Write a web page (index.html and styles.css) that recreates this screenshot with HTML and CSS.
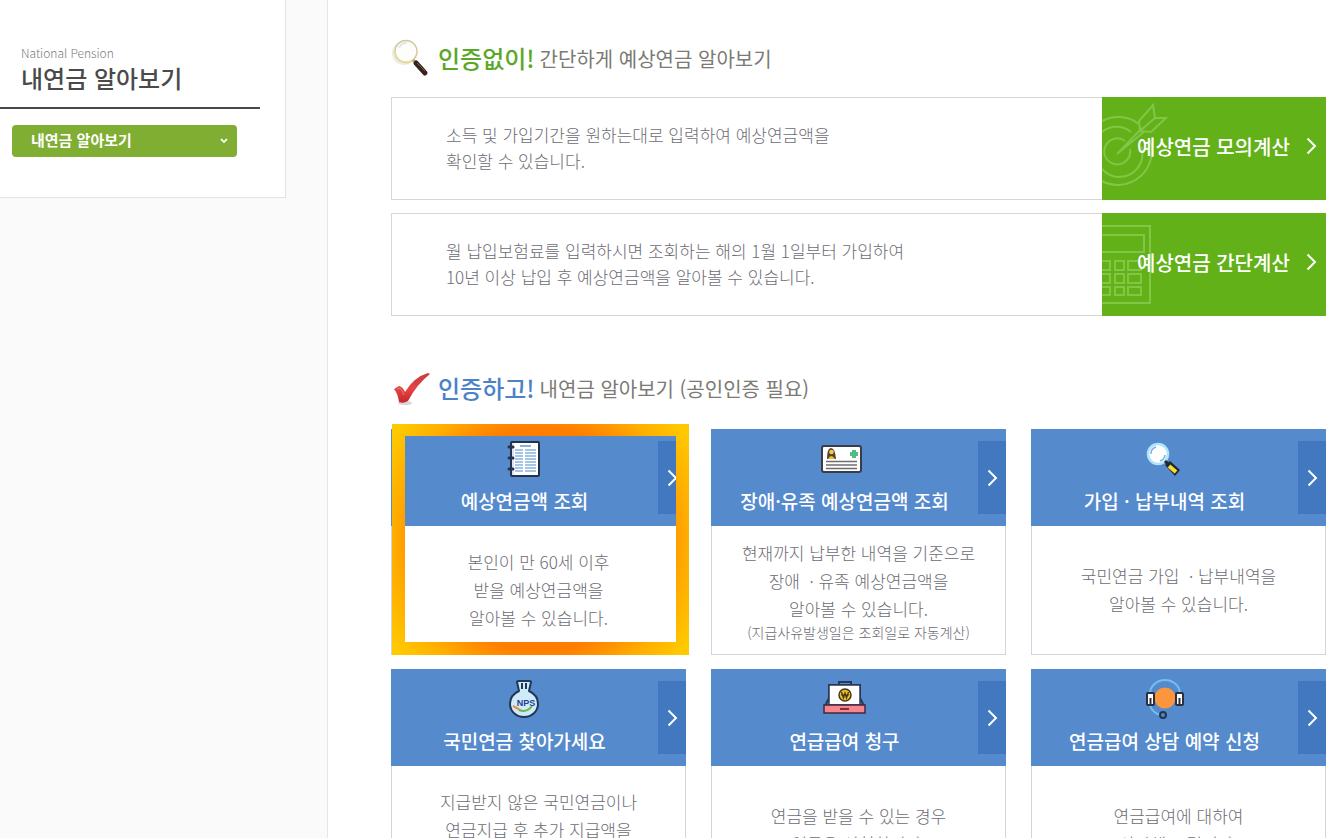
FILE: index.html
```html
<!DOCTYPE html>
<html lang="ko">
<head>
<meta charset="utf-8">
<meta name="viewport" content="width=device-width, initial-scale=1">
<title>내연금 알아보기</title>
<link rel="stylesheet" href="styles.css">
</head>
<body>
<div class="page">
  <aside class="side">
    <div class="side-box">
      <div class="side-head">
        <p class="side-eyebrow">National Pension</p>
        <h1 class="side-title">내연금 알아보기</h1>
      </div>
      <div class="side-menu">
        <select class="side-select" aria-label="메뉴 선택">
          <option>내연금 알아보기</option>
        </select>
        <svg class="side-caret" width="8" height="6" viewBox="0 0 8 6" aria-hidden="true"><path d="M1 1.2 L4 4 L7 1.2" fill="none" stroke="#fff" stroke-width="1.8"/></svg>
      </div>
    </div>
  </aside>

  <main class="main">
    <section>
      <h2 class="heading">
        <svg class="heading-icon" width="40" height="40" viewBox="0 0 40 40" aria-hidden="true">
          <circle cx="13" cy="15" r="12" fill="#ececea"/>
          <circle cx="15" cy="13.500" r="11" fill="#fdfdfc" stroke="#d3c99c" stroke-width="1.400"/>
          <path d="M4 14 A11 11 0 0 0 22 22" fill="none" stroke="#eadb92" stroke-width="1.600"/>
          <path d="M8 10 A8 8 0 0 1 16 5" fill="none" stroke="#e4e7e8" stroke-width="2"/>
          <path d="M22 22 L26 26" stroke="#b9a878" stroke-width="3"/>
          <path d="M25 25 L34 35" stroke="#35231c" stroke-width="5" stroke-linecap="round"/>
          <path d="M26 25 L34 33" stroke="#765b4c" stroke-width="1"/>
        </svg>
        <strong class="heading-mark green">인증없이!</strong>
        <span class="heading-text">간단하게 예상연금 알아보기</span>
      </h2>
      <div class="banners">
        <article class="banner">
          <p class="banner-text">소득 및 가입기간을 원하는대로 입력하여 예상연금액을<br>확인할 수 있습니다.</p>
          <a class="banner-link" href="#">
            <svg class="banner-art" width="66" height="103" viewBox="0 0 66 103" fill="none" stroke="#83c544" stroke-width="2" aria-hidden="true">
              <path d="M0 24 A34 34 0 0 1 37 27 M48 43 A34 34 0 0 1 0 84"/>
              <path d="M0 35 A23 23 0 0 1 29 35 M39 49 A23 23 0 0 1 0 72"/>
              <path d="M23 44 A13 13 0 1 0 28 52"/>
              <path d="M15 57 L40 31 M15 57 L43 34 M38 34 L37 24 L51 8 L53 21 L64 21 L49 35 Z M39 33 L53 21"/>
            </svg>
            <span>예상연금 모의계산</span>
            <svg class="chev" width="11" height="18" viewBox="0 0 11 18" aria-hidden="true"><path d="M1.500 1.500 L9 9 L1.500 16.500"/></svg>
          </a>
        </article>
        <article class="banner">
          <p class="banner-text">월 납입보험료를 입력하시면 조회하는 해의 1월 1일부터 가입하여<br>10년 이상 납입 후 예상연금액을 알아볼 수 있습니다.</p>
          <a class="banner-link" href="#">
            <svg class="banner-art" width="66" height="103" viewBox="0 0 66 103" fill="none" stroke="#83c544" stroke-width="2" aria-hidden="true">
              <path d="M0 13 H48 V90 H0 M0 22 H42 V39 H0"/>
              <path d="M0 48 H8 V57 H0 M13 48 H22 V57 H13 Z M26 48 H39 V57 H26 Z"/>
              <path d="M0 61 H8 V70 H0 M13 61 H22 V70 H13 Z M26 61 H39 V70 H26 Z"/>
              <path d="M0 74 H8 V82 H0 M13 74 H22 V82 H13 Z M26 74 H39 V82 H26 Z"/>
            </svg>
            <span>예상연금 간단계산</span>
            <svg class="chev" width="11" height="18" viewBox="0 0 11 18" aria-hidden="true"><path d="M1.500 1.500 L9 9 L1.500 16.500"/></svg>
          </a>
        </article>
      </div>
    </section>

    <section>
      <h2 class="heading second">
        <svg class="heading-icon" width="40" height="40" viewBox="0 0 40 40" aria-hidden="true">
          <defs><linearGradient id="tick" x1="0" y1="0" x2="0" y2="1"><stop offset="0" stop-color="#c93a3c"/><stop offset=".55" stop-color="#e54444"/><stop offset="1" stop-color="#c4262d"/></linearGradient></defs>
          <ellipse cx="14" cy="35" rx="7" ry="2" fill="#d9d5d5"/>
          <path d="M3 21 L8 18 Q12 19 14 24 Q23 9 37 5 L39 6 Q26 16 17 33 Q12 36 8 34 Q7 26 3 21 Z" fill="url(#tick)"/>
          <path d="M6 21 L9 20 Q11 22 13 27" fill="none" stroke="#ee7472" stroke-width="1"/>
        </svg>
        <strong class="heading-mark blue">인증하고!</strong>
        <span class="heading-text">내연금 알아보기 (공인인증 필요)</span>
      </h2>
      <div class="cards">
        <article class="card picked">
          <a class="card-head" href="#">
            <span class="card-name">
              <svg width="48" height="42" viewBox="0 0 48 42" aria-hidden="true">
                <rect x="10" y="4" width="28" height="34" rx="1" fill="#fff" stroke="#26324c" stroke-width="2"/>
                <path d="M12 5 V37" stroke="#b9c6d8" stroke-width="1"/>
                <path d="M8 9 H12 M8 20 H12 M8 31 H12" stroke="#26324c" stroke-width="3" stroke-linecap="round"/>
                <path d="M19 8 H30" stroke="#86b3de" stroke-width="2"/>
                <path d="M14 12 H22 M24 12 H35 M14 15 H22 M24 15 H35 M14 18 H22 M24 18 H35 M14 21 H22 M24 21 H35 M14 24 H22 M24 24 H35 M14 27 H22 M24 27 H35 M14 30 H22 M24 30 H35 M14 33 H22 M24 33 H35" stroke="#86b3de" stroke-width="1.600"/>
              </svg>
              <span>예상연금액 조회</span>
            </span>
            <span class="card-go"><svg class="chev" width="11" height="18" viewBox="0 0 11 18" aria-hidden="true"><path d="M1.500 1.500 L9 9 L1.500 16.500"/></svg></span>
          </a>
          <p class="card-text">본인이 만 60세 이후<br>받을 예상연금액을<br>알아볼 수 있습니다.</p>
          <div class="frame"></div>
        </article>

        <article class="card">
          <a class="card-head" href="#">
            <span class="card-name">
              <svg width="48" height="42" viewBox="0 0 48 42" aria-hidden="true">
                <rect x="1" y="8" width="39" height="26" rx="2" fill="#fff" stroke="#3a3d48" stroke-width="2"/>
                <path d="M6 21 Q6 10 10 10 Q14 10 15 21 Z" fill="#51432c"/>
                <circle cx="10.500" cy="14" r="2.300" fill="#f6c947"/><path d="M7 21 Q10 15 14 21 Z" fill="#f4bd2e"/>
                <path d="M33 12 V20 M29 16 H37" stroke="#55bd84" stroke-width="4"/>
                <path d="M5 23.500 H36 M5 27 H36 M5 30.500 H36" stroke="#716c70" stroke-width="1.600"/>
              </svg>
              <span>장애·유족 예상연금액 조회</span>
            </span>
            <span class="card-go"><svg class="chev" width="11" height="18" viewBox="0 0 11 18" aria-hidden="true"><path d="M1.500 1.500 L9 9 L1.500 16.500"/></svg></span>
          </a>
          <p class="card-text">현재까지 납부한 내역을 기준으로<br>장애 &nbsp;· 유족 예상연금액을<br>알아볼 수 있습니다.<small>(지급사유발생일은 조회일로 자동계산)</small></p>
        </article>

        <article class="card">
          <a class="card-head" href="#">
            <span class="card-name">
              <svg width="48" height="42" viewBox="0 0 48 42" aria-hidden="true">
                <circle cx="17" cy="16" r="10" fill="#fff" stroke="#aee5fa" stroke-width="2.500"/>
                <path d="M10 16 A7 7 0 0 1 15 9 M19 23 A7 7 0 0 0 24 17" fill="none" stroke="#78aee6" stroke-width="1.500"/>
                <path d="M24 23 L28 27" stroke="#25282c" stroke-width="3"/>
                <path d="M24 27 L29 23 L39 32 L34 38 Z" fill="#25282c"/>
                <path d="M28 28 L35 34" stroke="#f8dd38" stroke-width="4"/>
              </svg>
              <span>가입 · 납부내역 조회</span>
            </span>
            <span class="card-go"><svg class="chev" width="11" height="18" viewBox="0 0 11 18" aria-hidden="true"><path d="M1.500 1.500 L9 9 L1.500 16.500"/></svg></span>
          </a>
          <p class="card-text">국민연금 가입 &nbsp;· 납부내역을<br>알아볼 수 있습니다.</p>
        </article>

        <article class="card">
          <a class="card-head" href="#">
            <span class="card-name">
              <svg width="48" height="42" viewBox="0 0 48 42" aria-hidden="true">
                <path d="M16 4 Q16 3 18 3 H28 Q30 3 30 4 L28 13 Q37 17 37 26 A14 13 0 0 1 9 26 Q9 17 18 13 Z" fill="#cfeafa" stroke="#213854" stroke-width="2" stroke-linejoin="round"/>
                <path d="M21 5 V11 M25 5 V11" stroke="#213854" stroke-width="2"/>
                <path d="M12 28 Q16 30 19 32" fill="none" stroke="#ee8a4b" stroke-width="2"/><path d="M18 32 Q26 35 31 28" fill="none" stroke="#68b946" stroke-width="2"/>
                <text class="bag-text" x="25" y="28">NPS</text>
              </svg>
              <span>국민연금 찾아가세요</span>
            </span>
            <span class="card-go"><svg class="chev" width="11" height="18" viewBox="0 0 11 18" aria-hidden="true"><path d="M1.500 1.500 L9 9 L1.500 16.500"/></svg></span>
          </a>
          <p class="card-text">지급받지 않은 국민연금이나<br>연금지급 후 추가 지급액을<br>확인할 수 있습니다.</p>
        </article>

        <article class="card">
          <a class="card-head" href="#">
            <span class="card-name">
              <svg width="48" height="42" viewBox="0 0 48 42" aria-hidden="true">
                <path d="M18 7 V4 H30 V7" fill="none" stroke="#293854" stroke-width="2"/>
                <path d="M4 28 L8 20 V7 H39 V20 L43 28" fill="none" stroke="#293854" stroke-width="2"/>
                <rect x="8" y="7" width="31" height="20" fill="#fff" stroke="#293854" stroke-width="1.500"/>
                <rect x="3" y="27" width="41" height="8" fill="#f7858e" stroke="#40273c" stroke-width="1.500"/>
                <circle cx="24" cy="17" r="6" fill="#edbd27" stroke="#44391c" stroke-width="1.500"/>
                <path d="M20.500 14 L22.500 20 L24 15 L25.500 20 L27.500 14 M20 17 H28" fill="none" stroke="#3e3217" stroke-width="1.200"/>
                <path d="M19 31 H28" stroke="#7f3045" stroke-width="2"/>
              </svg>
              <span>연급급여 청구</span>
            </span>
            <span class="card-go"><svg class="chev" width="11" height="18" viewBox="0 0 11 18" aria-hidden="true"><path d="M1.500 1.500 L9 9 L1.500 16.500"/></svg></span>
          </a>
          <p class="card-text">연금을 받을 수 있는 경우<br>연금을 신청합니다.</p>
        </article>

        <article class="card">
          <a class="card-head" href="#">
            <span class="card-name">
              <svg width="48" height="42" viewBox="0 0 48 42" aria-hidden="true">
                <path d="M9 16 A15 14 0 0 1 39 16 M9 27 Q11 35 20 37" fill="none" stroke="#75bdf0" stroke-width="2"/>
                <circle cx="24" cy="20" r="10.500" fill="#fb963d"/>
                <rect x="6" y="15" width="7" height="12" rx="1" fill="#fff" stroke="#29303d" stroke-width="2"/>
                <rect x="35" y="15" width="7" height="12" rx="1" fill="#fff" stroke="#29303d" stroke-width="2"/>
                <path d="M9.500 20 V26 M38.500 20 V26" stroke="#29303d" stroke-width="2"/>
                <circle cx="22" cy="37" r="3" fill="#5d84b5" stroke="#1d3557" stroke-width="2"/>
              </svg>
              <span>연금급여 상담 예약 신청</span>
            </span>
            <span class="card-go"><svg class="chev" width="11" height="18" viewBox="0 0 11 18" aria-hidden="true"><path d="M1.500 1.500 L9 9 L1.500 16.500"/></svg></span>
          </a>
          <p class="card-text">연금급여에 대하여<br>상담해 드립니다.</p>
        </article>
      </div>
    </section>
  </main>
</div>
</body>
</html>
```

FILE: styles.css
```css
* { box-sizing: border-box; }
body { margin: 0; background: #fff; color: #6c6c74; font-family: "Noto Sans CJK KR", sans-serif; }
h1, h2, p { margin: 0; }
a { color: inherit; text-decoration: none; }
svg { display: block; flex: none; }

.page { display: grid; grid-template-columns: 328px minmax(0, 1fr); height: 100vh; overflow: hidden; }

.side { background: #fafafa; border-right: 1px solid #e6e6e6; }
.side-box { width: 286px; padding: 44px 0 40px; background: #fff; border: solid #e2e2e2; border-width: 0 1px 1px 0; }
.side-head { margin-right: 25px; padding: 0 0 14px 21px; border-bottom: 2px solid #484848; }
.side-eyebrow { font-size: 12px; line-height: 18px; font-weight: 300; color: #7c7c7c; }
.side-title { font-size: 24px; line-height: 31px; font-weight: 500; color: #4a4a4a; }
.side-menu { position: relative; width: 225px; margin: 16px 0 0 12px; }
.side-select { appearance: none; display: block; width: 100%; height: 32px; padding: 0 19px 3px; border: 0; border-radius: 4px; background: #80ae32; color: #fff; font-family: inherit; font-size: 15px; font-weight: 700; }
.side-caret { position: absolute; right: 9px; top: 13px; }

.main { padding: 36px 11px 0 63px; }
.heading { display: flex; align-items: center; height: 44px; margin-bottom: 17px; }
.heading.second { margin: 50px 0 19px; }
.heading-icon { margin-right: 7px; }
.heading-mark { margin-right: 5px; padding-bottom: 2px; font-size: 24px; font-weight: 500; }
.heading-text { font-size: 20px; font-weight: 400; color: #7b7a74; }
.green { color: #5ba829; }
.blue { color: #4b82c8; }

.banners { display: grid; gap: 13px; }
.banner { display: grid; grid-template-columns: minmax(0, 1fr) 224px; min-height: 103px; }
.banner-text { padding: 24px 0 0 54px; border: 1px solid #d6d6d2; border-right: 0; font-size: 17px; line-height: 26px; font-weight: 300; }
.banner-link { position: relative; display: flex; align-items: center; justify-content: space-between; padding: 0 9px 5px 35px; background: #62b119; color: #fff; font-size: 20px; font-weight: 500; }
.banner-link span { position: relative; }
.banner-art { position: absolute; left: 0; top: 0; }
.chev { fill: none; stroke: #fff; stroke-width: 2; }

.cards { display: grid; grid-template-columns: repeat(3, minmax(0, 1fr)); gap: 14px 25px; }
.card { position: relative; display: grid; grid-template-rows: 97px minmax(129px, auto); }
.card-head { display: grid; grid-template-columns: minmax(0, 1fr) 28px; background: #558acd; color: #fff; }
.card-name { display: flex; flex-direction: column; align-items: center; padding-top: 9px; font-size: 19px; line-height: 42px; font-weight: 500; white-space: nowrap; }
.card-go { display: flex; align-items: center; justify-content: center; margin: 12px 0; background: #4178bf; }
.card-text { align-content: center; border: 1px solid #d0d6dd; border-top: 0; text-align: center; font-size: 17px; line-height: 28px; font-weight: 300; }
.card-text small { display: block; font-size: 14px; line-height: 18px; }
.bag-text { font-family: "Liberation Sans", sans-serif; font-size: 9px; font-weight: 700; fill: #243e94; text-anchor: middle; }

/* Highlight ring over the selected card */
.frame { position: absolute; inset: -5px -3px 0 1px; border: 13px solid; border-top-width: 12px; border-image: radial-gradient(circle, #ff7e00 112px, #ffae00 148px, #ffc900 180px) 12 13 13; pointer-events: none; }
```
